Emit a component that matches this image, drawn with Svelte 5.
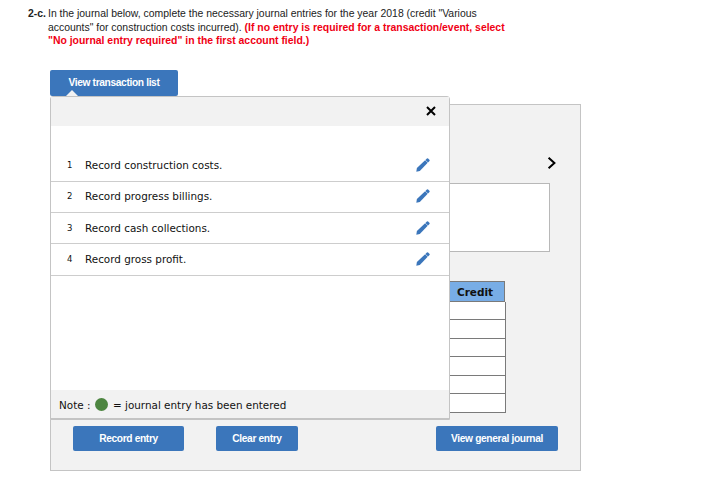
<script>
  const transactions = [
    "Record construction costs.",
    "Record progress billings.",
    "Record cash collections.",
    "Record gross profit."
  ];
  const creditRows = [1, 2, 3, 4, 5, 6];
</script>

<main class="page">
  <div class="question">
    <b class="num">2-c.</b>
    <p>
      In the journal below, complete the necessary journal entries for the year 2018 (credit "Various
      accounts" for construction costs incurred). <strong>(If no entry is required for a transaction/event, select
      "No journal entry required" in the first account field.)</strong>
    </p>
  </div>

  <div class="workspace">
    <button type="button" class="btn list-btn">View transaction list</button>

    <section class="panel">
      <div class="panel-top">
        <svg class="chevron" width="10" height="12" viewBox="0 0 10 12">
          <path d="M1.6 0.8 L7.4 6 L1.6 11.2" fill="none" stroke="#000" stroke-width="2" />
        </svg>
        <div class="entry-box"></div>
      </div>
      <div class="credit">
        <div class="credit-head">Credit</div>
        {#each creditRows as row (row)}
          <div class="credit-row"></div>
        {/each}
      </div>
      <div class="actions">
        <button type="button" class="btn record">Record entry</button>
        <button type="button" class="btn clear">Clear entry</button>
        <button type="button" class="btn general">View general journal</button>
      </div>
    </section>

    <div class="popup">
      <span class="caret"></span>
      <div class="popup-head">
        <svg width="10" height="10" viewBox="0 0 10 10">
          <path d="M1 1 L9 9 M9 1 L1 9" stroke="#000" stroke-width="2" />
        </svg>
      </div>
      <ul class="list">
        {#each transactions as item, i}
          <li>
            <span class="idx">{i + 1}</span>
            <span class="label">{item}</span>
            <svg class="pencil" width="14" height="14" viewBox="0 0 14 14">
              <path d="M0.3 13.7 L0.9 10 L9.1 2.2 L11.7 4.8 L3.8 13 Z" fill="#3b76bb" />
              <path d="M9.4 1.9 L10.9 0.5 Q11.5 0 12.1 0.5 L13.4 1.8 Q14 2.4 13.5 3 L12 4.5 Z" fill="#3b76bb" />
            </svg>
          </li>
        {/each}
      </ul>
      <div class="note">
        Note : <span class="dot"></span> = journal entry has been entered
      </div>
    </div>
  </div>
</main>

<style>
  :global(body) {
    margin: 0;
    background: #fff;
  }

  .page {
    width: 723px;
    height: 498px;
    overflow: hidden;
    font-family: "Liberation Sans", Arial, sans-serif;
    color: #222;
  }

  .question {
    display: flex;
    gap: 3px;
    padding: 7px 0 0 28px;
    font-size: 10.43px;
    line-height: 13.5px;
  }

  .num {
    flex: none;
    width: 17px;
    white-space: nowrap;
  }

  .question p {
    margin: 0;
    width: 470px;
  }

  .question strong {
    color: #f00014;
  }

  .workspace {
    position: relative;
    margin: 22px 0 0 50px;
    width: 531px;
  }

  .btn {
    border: none;
    border-radius: 2px;
    background: #3b76bb;
    color: #fff;
    font-family: "Liberation Sans", Arial, sans-serif;
    font-size: 10.2px;
    font-weight: 700;
    letter-spacing: -0.35px;
    padding: 0;
    height: 25px;
  }

  .list-btn {
    display: block;
    width: 128px;
    height: 26px;
    padding: 0 0 1px;
  }

  .panel {
    box-sizing: border-box;
    margin-top: 8px;
    height: 367px;
    background: #f2f2f2;
    border: 1px solid #c4c4c4;
    padding-top: 52px;
    display: flex;
    flex-direction: column;
    align-items: flex-end;
  }

  .panel-top {
    display: flex;
    flex-direction: column;
    align-items: flex-end;
    width: 200px;
    padding-right: 30px;
    box-sizing: border-box;
  }

  .chevron {
    margin-right: -7px;
  }

  .entry-box {
    box-sizing: border-box;
    width: 200px;
    height: 69px;
    margin-top: 14px;
    background: #fff;
    border: 1px solid #b8b8b8;
  }

  .credit {
    align-self: flex-start;
    margin: 29px 0 0 398px;
    width: 57px;
  }

  .credit-head {
    box-sizing: border-box;
    width: 56px;
    height: 21px;
    background: #78ade6;
    border: 1px solid #7a7a7a;
    font-family: "DejaVu Sans", Verdana, sans-serif;
    font-size: 10.5px;
    font-weight: 700;
    line-height: 20px;
    padding-right: 4px;
    text-align: center;
    color: #111;
  }

  .credit-row {
    box-sizing: border-box;
    height: 18.5px;
    background: #fff;
    border: 1px solid #7a7a7a;
    border-top: none;
  }

  .actions {
    display: flex;
    align-self: flex-start;
    margin: 13px 0 0 22px;
  }

  .record {
    width: 111px;
  }

  .clear {
    width: 82px;
    margin-left: 32px;
  }

  .general {
    width: 122px;
    margin-left: 138px;
  }

  .popup {
    position: absolute;
    top: 26px;
    left: 0;
    box-sizing: border-box;
    width: 400px;
    height: 324px;
    display: flex;
    flex-direction: column;
    background: #fff;
    border: 1px solid #c4c4c4;
    border-radius: 3px 3px 0 0;
    font-family: "DejaVu Sans", Verdana, sans-serif;
    color: #111;
  }

  .caret {
    position: absolute;
    top: -7px;
    left: 15px;
    width: 0;
    height: 0;
    border: 6px solid transparent;
    border-top: none;
    border-bottom: 6px solid #f2f2f2;
  }

  .popup-head {
    flex: none;
    height: 29px;
    background: #f2f2f2;
    display: flex;
    align-items: center;
    justify-content: flex-end;
    padding-right: 13px;
  }

  .list {
    flex: 1;
    list-style: none;
    margin: 0;
    padding: 25px 0 0;
  }

  .list li {
    box-sizing: border-box;
    height: 31.3px;
    display: flex;
    align-items: center;
    padding: 0 0 1px 16px;
    border-bottom: 1px solid #cdcdcd;
    font-size: 10.4px;
  }

  .idx {
    width: 18px;
    font-size: 8.5px;
  }

  .label {
    flex: 1;
  }

  .pencil {
    margin-right: 19px;
  }

  .note {
    flex: none;
    height: 29px;
    box-sizing: border-box;
    background: #f2f2f2;
    border-bottom: 1px solid #c4c4c4;
    display: flex;
    align-items: center;
    gap: 1px;
    padding: 2px 0 0 8px;
    font-size: 10.4px;
    white-space: pre;
  }

  .dot {
    width: 13px;
    height: 13px;
    margin-right: 1px;
    border-radius: 50%;
    background: #4d8540;
  }
</style>
